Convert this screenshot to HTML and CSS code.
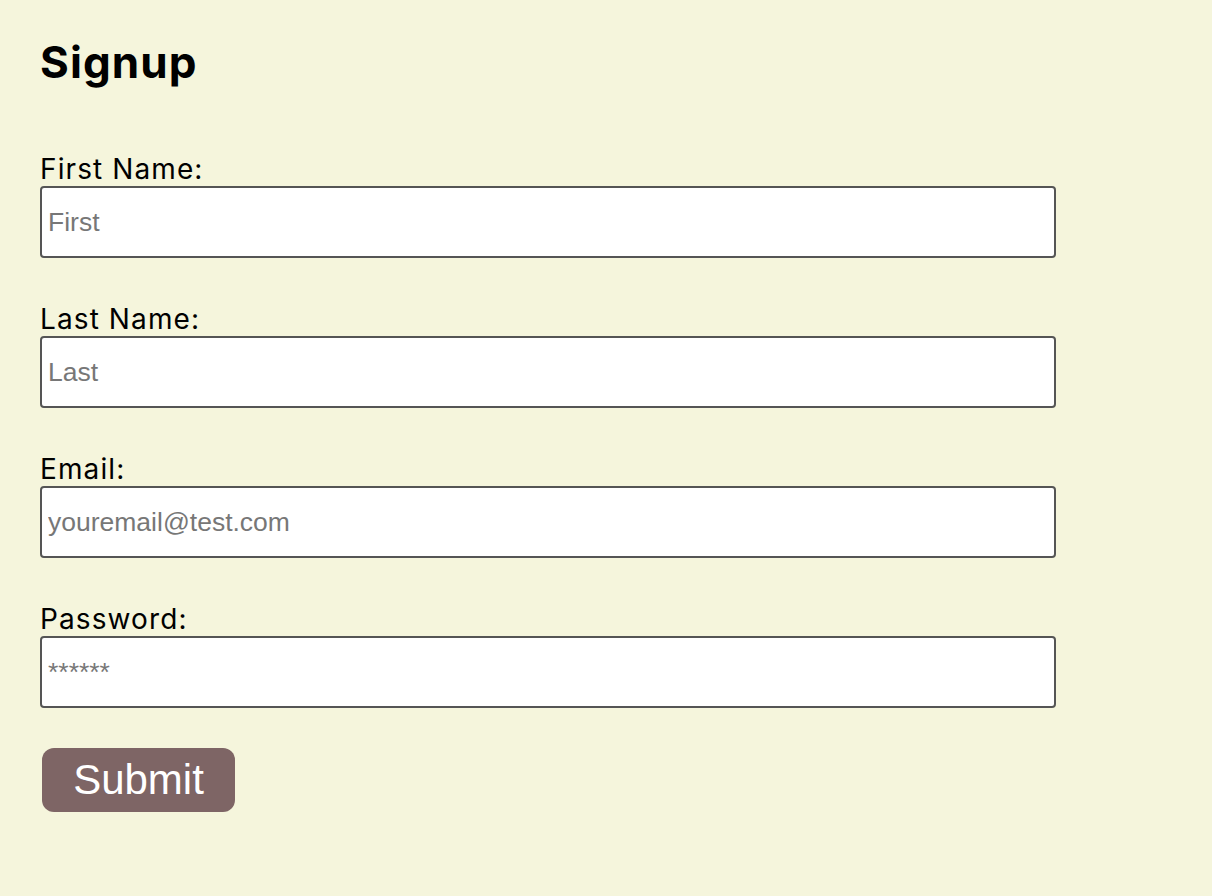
FILE: index.html
```html
<!DOCTYPE html>
<html>
<head>
<meta charset="utf-8">
<link rel="stylesheet" href="styles.css">
</head>
<body>
<h1 class="title">Signup</h1>
<form class="form">
  <div class="field">
    <label class="label" for="first">First Name:</label>
    <input class="input" id="first" type="text" placeholder="First">
  </div>
  <div class="field">
    <label class="label" for="last">Last Name:</label>
    <input class="input" id="last" type="text" placeholder="Last">
  </div>
  <div class="field">
    <label class="label" for="email">Email:</label>
    <input class="input" id="email" type="email" placeholder="youremail@test.com">
  </div>
  <div class="field">
    <label class="label" for="pw">Password:</label>
    <input class="input" id="pw" type="password" placeholder="******">
  </div>
  <button class="submit" type="button">Submit</button>
</form>
</body>
</html>
```

FILE: styles.css
```css
html, body {
  margin: 0;
  padding: 0;
}
body {
  background: #f5f5dc;
  font-family: Inter, "Noto Sans", sans-serif;
  color: #000;
  padding: 0 40px;
}
.title {
  margin: 0;
  padding-top: 34px;
  font-size: 44px;
  line-height: 56px;
  font-weight: 700;
  letter-spacing: 1.1px;
}
.form {
  display: flex;
  flex-direction: column;
  align-items: flex-start;
  margin-top: 62px;
}
.field {
  display: flex;
  flex-direction: column;
  width: 1016px;
  margin-bottom: 44px;
}
.label {
  font-size: 28px;
  line-height: 34px;
  letter-spacing: 1.1px;
}
.input {
  box-sizing: border-box;
  width: 1016px;
  height: 72px;
  margin: 0;
  border: 2px solid #555;
  border-radius: 4px;
  background: #fff;
  padding: 0 6px;
  font-family: "Liberation Sans", Arial, sans-serif;
  font-size: 26.5px;
  color: #000;
}
.input::placeholder {
  color: #777;
}
.submit {
  margin: -4px 0 0 2px;
  width: 193px;
  height: 64px;
  border: none;
  border-radius: 12px;
  background: #7e6565;
  color: #fff;
  font-family: "Liberation Sans", Arial, sans-serif;
  font-size: 42px;
  padding: 0;
}
```
